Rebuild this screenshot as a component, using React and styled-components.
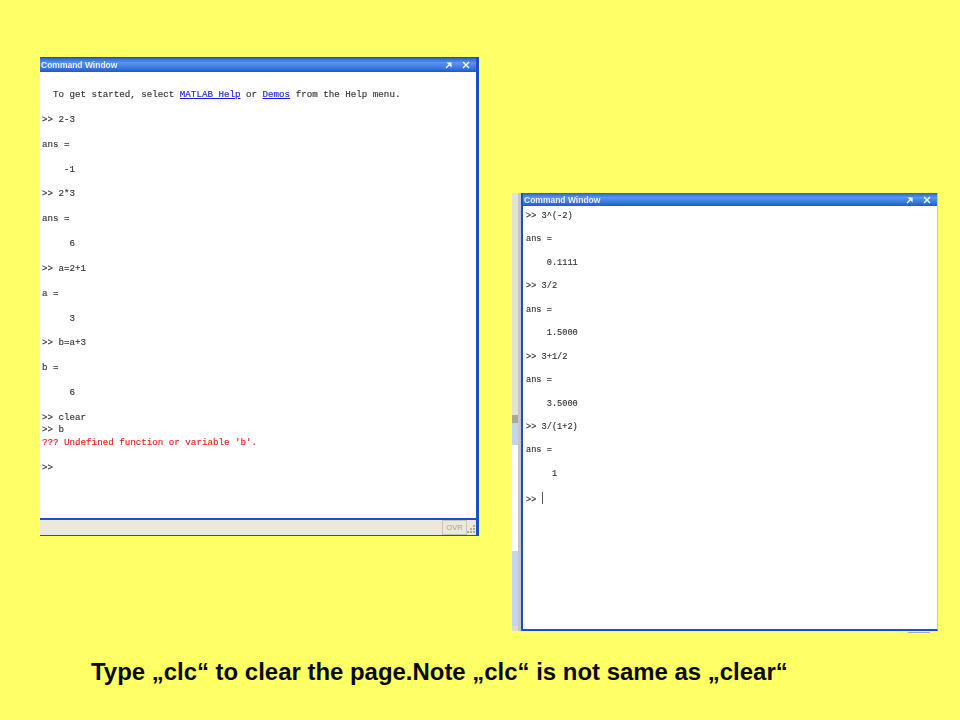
// Slide with two MATLAB command window screenshots and a caption
import React from 'react';
import styled, { createGlobalStyle } from 'styled-components';

const Global = createGlobalStyle`
    html, body {
        margin: 0;
        padding: 0;
        background: #ffff66;
    }
`;

const Slide = styled.div`
    width: 960px;
    height: 720px;
    background: #ffff66;
    overflow: hidden;
    display: flex;
    flex-direction: column;
`;

const Shots = styled.div`
    height: 650px;
    padding: 57px 22px 0 40px;
    box-sizing: border-box;
    display: flex;
    align-items: flex-start;
`;

const Window = styled.div`
    width: ${p => p.$width}px;
    height: ${p => p.$height}px;
    box-sizing: border-box;
    background: #fff;
    display: flex;
    flex-direction: column;
    border-style: solid;
    border-color: #1c4fc4;
    border-width: ${p => p.$border};
    border-right-color: ${p => p.$rightColor || '#1c4fc4'};
`;

const TitleBar = styled.div`
    height: ${p => p.$height}px;
    flex: none;
    display: flex;
    align-items: center;
    justify-content: space-between;
    padding: 0 6px 0 ${p => p.$left}px;
    background: linear-gradient(#2a62d2, #5a94ee 35%, #3d78e2 70%, #2258cc);
    color: #e6eeff;
    font: bold 8.5px "Liberation Sans", Arial, sans-serif;
    filter: blur(0.2px);
`;

const TitleIcons = styled.div`
    display: flex;
    align-items: center;
    gap: 9px;
`;

const Console = styled.pre`
    flex: 1;
    margin: 0;
    padding: ${p => p.$pad};
    font-family: "Liberation Mono", "Courier New", monospace;
    font-size: ${p => p.$size}px;
    line-height: ${p => p.$line}px;
    color: #333;
    -webkit-text-stroke: 0.15px #333;
    filter: blur(0.3px);
`;

const HelpLink = styled.span`
    color: #1a1ae0;
    -webkit-text-stroke: 0.15px #1a1ae0;
    text-decoration: underline;
`;

const ErrorText = styled.span`
    color: #f01c1c;
    -webkit-text-stroke: 0.15px #f01c1c;
`;

const Caret = styled.span`
    display: inline-block;
    width: 1px;
    height: 12px;
    vertical-align: -2px;
    background: #555;
`;

const StatusBar = styled.div`
    height: 17px;
    flex: none;
    box-sizing: border-box;
    display: flex;
    align-items: stretch;
    justify-content: flex-end;
    background: #ece9d8;
    border-top: 2px solid #1c4fc4;
`;

const OvrBox = styled.div`
    width: 23px;
    border: 1px solid #c9c6b6;
    color: #a8a596;
    font: 7.5px/13px "Liberation Sans", Arial, sans-serif;
    text-align: center;
`;

const Grip = styled.svg`
    width: 9px;
    height: 15px;
`;

const RightGroup = styled.div`
    margin-left: 33px;
    margin-top: 136px;
    display: flex;
    align-items: stretch;
    position: relative;
`;

const SideStrip = styled.div`
    width: 9px;
    height: 438px;
    display: flex;
    flex-direction: column;
    background: #fff;
    border-right: 3px solid #c4c8c8;
    box-sizing: border-box;
`;

const StripPart = styled.div`
    height: ${p => p.$height}px;
    flex: ${p => (p.$grow ? 1 : 'none')};
    background: ${p => p.$color};
`;

// small rule that sticks out under the right window
const UnderRule = styled.div`
    position: absolute;
    right: 8px;
    bottom: -2px;
    width: 22px;
    height: 1px;
    background: #a8a8a0;
`;

const Caption = styled.div`
    padding-left: 91px;
    font: bold 23.95px/44px "Liberation Sans", Arial, sans-serif;
    color: #0a0a0a;
    white-space: nowrap;
`;

const PinIcon = () => (
    <svg width="8" height="8" viewBox="0 0 8 8">
        <path d="M1 7 L4 4 M3 2 L6 2 L6 5 Z" stroke="#fff" strokeWidth="1.2" fill="#fff" />
    </svg>
);

const CloseIcon = () => (
    <svg width="8" height="8" viewBox="0 0 8 8">
        <path d="M1 1 L7 7 M7 1 L1 7" stroke="#fff" strokeWidth="1.4" />
    </svg>
);

const App = () => (
    <Slide>
        <Global />
        <Shots>
            <Window $width={439} $height={479} $border="1px 3px 1px 0">
                <TitleBar $height={14} $left={1}>
                    Command Window
                    <TitleIcons>
                        <PinIcon />
                        <CloseIcon />
                    </TitleIcons>
                </TitleBar>
                <Console $size={9.2} $line={12.42} $pad="17px 0 0 2px">
{`  To get started, select `}<HelpLink>MATLAB Help</HelpLink>{` or `}<HelpLink>Demos</HelpLink>{` from the Help menu.

>> 2-3

ans =

    -1

>> 2*3

ans =

     6

>> a=2+1

a =

     3

>> b=a+3

b =

     6

>> clear
>> b
`}<ErrorText>{`??? Undefined function or variable 'b'.`}</ErrorText>{`

>>`}
                </Console>
                <StatusBar>
                    <OvrBox>OVR</OvrBox>
                    <Grip viewBox="0 0 9 15">
                        <path d="M6 5h2v2H6z M3 8h2v2H3z M6 8h2v2H6z M0 11h2v2H0z M3 11h2v2H3z M6 11h2v2H6z" fill="#a9b48c" />
                    </Grip>
                </StatusBar>
            </Window>
            <RightGroup>
                <SideStrip>
                    <StripPart $height={222} $color="#e4e2d6" />
                    <StripPart $height={8} $color="#a8a8a0" />
                    <StripPart $height={22} $color="#c4d4ec" />
                    <StripPart $grow $color="#ffffff" />
                    <StripPart $height={75} $color="#c4d4ec" />
                    <StripPart $height={5} $color="#dcdcd4" />
                </SideStrip>
                <Window $width={417} $height={438} $border="0 1px 2px 2px" $rightColor="#b8c8dc">
                    <TitleBar $height={13} $left={1}>
                        Command Window
                        <TitleIcons>
                            <PinIcon />
                            <CloseIcon />
                        </TitleIcons>
                    </TitleBar>
                    <Console $size={8.65} $line={11.72} $pad="5px 0 0 3px">
{`>> 3^(-2)

ans =

    0.1111

>> 3/2

ans =

    1.5000

>> 3+1/2

ans =

    3.5000

>> 3/(1+2)

ans =

     1

>> `}<Caret />
                    </Console>
                </Window>
                <UnderRule />
            </RightGroup>
        </Shots>
        <Caption>Type „clc“ to clear the page.Note „clc“ is not same as „clear“</Caption>
    </Slide>
);

export default App;
